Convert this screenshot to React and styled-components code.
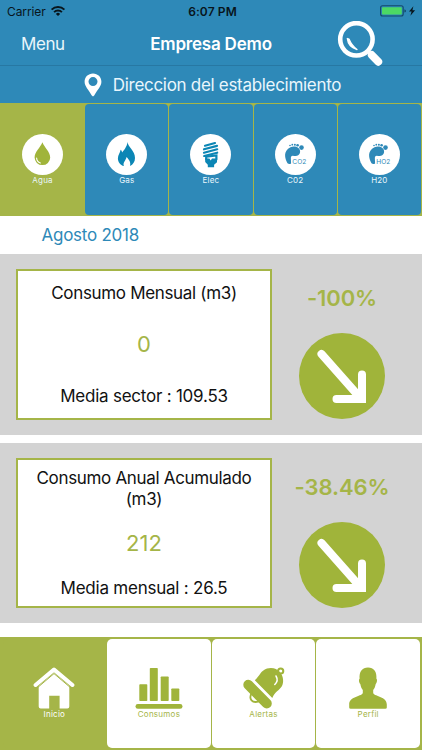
import React from 'react'
import styled, { createGlobalStyle } from 'styled-components'

const BLUE = '#2e89b8'
const GREEN = '#a5b548'
const ICON_GREEN = '#a0b43a'

function App() {
    return (
        <>
            <GlobalStyle />
            <Screen>
                <StatusBar>
                    <Carrier>
                        Carrier
                        <WifiIcon />
                    </Carrier>
                    <Clock>6:07 PM</Clock>
                    <Power>
                        <BatteryIcon />
                    </Power>
                </StatusBar>
                <NavBar>
                    <MenuButton>Menu</MenuButton>
                    <NavTitle>Empresa Demo</NavTitle>
                    <SearchButton aria-label="Buscar"><SearchIcon /></SearchButton>
                </NavBar>
                <AddressBar>
                    <PinIcon />
                    <Address>Direccion del establecimiento</Address>
                </AddressBar>
                <SupplyTabs>
                    {supplies.map(({ label, Icon, active }) => (
                        <SupplyTab key={label} $active={active}>
                            <Icon />
                            <SupplyLabel>{label}</SupplyLabel>
                        </SupplyTab>
                    ))}
                </SupplyTabs>
                <Month>Agosto 2018</Month>
                {readings.map((item) => (
                    <Reading key={item.title}>
                        <ReadingBox>
                            <ReadingTitle>{item.title}</ReadingTitle>
                            <ReadingValue>{item.value}</ReadingValue>
                            <ReadingAverage>{item.average}</ReadingAverage>
                        </ReadingBox>
                        <Trend>
                            <TrendValue>{item.change}</TrendValue>
                            <TrendIcon />
                        </Trend>
                    </Reading>
                ))}
                <Footer>
                    {sections.map(({ label, Icon, active }) => (
                        <FooterTab key={label} $active={active}>
                            <Icon />
                            <FooterLabel>{label}</FooterLabel>
                        </FooterTab>
                    ))}
                </Footer>
            </Screen>
        </>
    )
}

export default App

// icons

const WifiIcon = () => (
    <svg width="16" height="12" viewBox="0 0 16 12" fill="none" stroke="#08151c" strokeWidth="2">
        <path d="M1.6 4.6a9.2 9.2 0 0 1 12.8 0" />
        <path d="M4.1 7.1a5.6 5.6 0 0 1 7.8 0" />
        <path d="M8 11 5.9 8.9a3 3 0 0 1 4.2 0z" fill="#08151c" stroke="none" />
    </svg>
)

const BatteryIcon = () => (
    <svg width="38" height="12" viewBox="0 0 38 12">
        <rect x=".6" y=".8" width="22.6" height="10.2" rx="2" fill="none" stroke="#14496a" strokeWidth="1.1" />
        <rect x="2" y="2.2" width="19.8" height="7.4" rx=".8" fill="#4cd964" />
        <path d="M24.4 4.2q1.6.5 1.6 1.7t-1.6 1.7z" fill="#14496a" />
        <path d="M33.4 1.2 29 6.6h2.6l-1.2 4.2 4.7-5.6h-2.7z" fill="#08151c" />
    </svg>
)

const SearchIcon = () => (
    <svg width="46" height="46" viewBox="0 0 46 46" fill="none" stroke="#fff" strokeLinecap="round">
        <circle cx="19.4" cy="18.3" r="16.2" strokeWidth="4.6" />
        <path d="m30.5 30 3 3" strokeWidth="3" strokeLinecap="butt" />
        <path d="m34.7 34 6.6 6.8" strokeWidth="7.8" />
        <path d="M10.3 17.5Q11.2 26.2 20 28.6Q14.5 24.2 12 18Z" fill="#fff" strokeWidth="1.3" strokeLinejoin="round" />
    </svg>
)

const PinIcon = () => (
    <svg width="18" height="24" viewBox="0 0 18 24">
        <path
            fill="#fff"
            fillRule="evenodd"
            d="M9 .5C4.2.5.6 4.1.6 8.7c0 4.6 4 7.8 7.2 13.9q1.2 1.6 2.4 0C13.4 16.5 17.4 13.3 17.4 8.7 17.4 4.1 13.8.5 9 .5zM9 4.1a4.500 4.500 0 1 1 0 9 4.500 4.500 0 0 1 0-9z"
        />
    </svg>
)

const DropIcon = () => (
    <svg width="41" height="41" viewBox="0 0 41 41">
        <circle cx="20.5" cy="20.5" r="20.5" fill="#fff" />
        <path d="M20.4 8.2C18.4 13.5 12.6 17.8 12.6 23.6a7.8 7.5 0 0 0 15.6 0c0-5.8-5.8-10.1-7.8-15.4z" fill={ICON_GREEN} />
        <path d="M14.6 24q.2 3.800 3.800 5" fill="none" stroke="#fff" strokeWidth="1.1" strokeLinecap="round" />
    </svg>
)

const FlameIcon = () => (
    <svg width="41" height="41" viewBox="0 0 41 41">
        <circle cx="20.5" cy="20.5" r="20.5" fill="#fff" />
        <path
            fill="#0b86b5"
            d="M21.5 8c.3 5 7.5 8.5 7.5 16 0 3.8-2 6.500-5 8 1-3.500-.6-6-3.500-9-.4 3.500-4 5.200-2.600 9-3.600-1-6-3.900-6-7.600 0-3.600 2.200-5.400 2.700-8.600 1 .8 1.400 1.700 1.500 2.800C18 16 20.900 13 21.500 8z"
        />
    </svg>
)

const BulbIcon = () => (
    <svg width="41" height="41" viewBox="0 0 41 41">
        <circle cx="20.5" cy="20.5" r="20.5" fill="#fff" />
        <g fill="none" stroke="#0b86b5" strokeWidth="2.2" strokeLinecap="round">
            <path d="m15 11.7 10-2.7" />
            <path d="m14 15.3 13-3.4" />
            <path d="m14 18.7 13.2-3.4" />
            <path d="m14.2 22 13-3.3" />
            <path d="M16.2 25.5v-2.8l10.2-1.2v4" />
        </g>
        <path d="M15.2 24.5h4.2l1.3 2 1.3-2h5v3.7l-2.9 2.6v2.4h-6.300v-2.400l-2.600-2.800z" fill="#0b86b5" />
    </svg>
)

const FootprintIcon = ({ formula }) => (
    <svg width="41" height="41" viewBox="0 0 41 41">
        <circle cx="20.5" cy="20.5" r="20.5" fill="#fff" />
        <g fill={BLUE}>
            <path d="M15.5 13.3c4-2 9.500.1 9.600 4.100.1 3.700-3.400 5-6.400 4.500-2.700-.4-3 1.200-2.800 3.400l.2 4.200q-2 1.200-3.600-.2C9.800 24.500 7.800 17 15.500 13.300z" />
            <circle cx="26.5" cy="13.6" r="2.3" />
            <circle cx="22.6" cy="11.3" r="1.3" />
            <circle cx="19.9" cy="10.7" r="1" />
            <circle cx="17.3" cy="10.7" r=".9" />
            <circle cx="15" cy="11.5" r=".8" />
        </g>
        <Formula x="17.3" y="29.5" textLength="14" lengthAdjust="spacingAndGlyphs">{formula}</Formula>
    </svg>
)

const Co2Icon = () => <FootprintIcon formula="CO2" />
const H2oIcon = () => <FootprintIcon formula="HO2" />

const TrendIcon = () => (
    <svg width="86" height="86" viewBox="0 0 86 86">
        <circle cx="43" cy="43" r="43" fill={ICON_GREEN} />
        <g fill="none" stroke="#fff" strokeWidth="8" strokeLinecap="round">
            <path d="m22.5 21 38 43" />
            <path d="M37.5 66H63V41.5" />
        </g>
    </svg>
)

const HouseIcon = () => (
    <svg width="42" height="42" viewBox="0 0 42 42">
        <path d="M21 6 36.3 19v20.5q0 2-2 2H26.600V28.800H16.200v12.700H7.700q-2 0-2-2V19z" fill="#fff" />
        <path d="M4.3 20.8 21 6.6l16.7 14.2" fill="none" stroke={GREEN} strokeWidth="1" />
        <path d="M2.6 18 21 2.6 39.4 18" fill="none" stroke="#fff" strokeWidth="4" strokeLinecap="round" strokeLinejoin="round" />
    </svg>
)

const ChartIcon = () => (
    <svg width="48" height="42" viewBox="0 0 48 42" fill={ICON_GREEN}>
        <rect x="4.3" y="17.3" width="8" height="16.7" rx=".8" />
        <rect x="14.8" y="1" width="8" height="33" rx=".8" />
        <rect x="25.7" y="9.5" width="8" height="24.5" rx=".8" />
        <rect x="36.3" y="21.5" width="8" height="12.5" rx=".8" />
        <rect x=".5" y="37" width="47" height="4.8" rx="2.4" />
    </svg>
)

const BellIcon = () => (
    <svg width="42" height="42" viewBox="0 0 42 42">
        <circle cx="37.7" cy="4" r="2.6" fill="none" stroke={ICON_GREEN} strokeWidth="2" />
        <path d="M11.800 13.200C16.500 9.500 17.500 3.500 24 1.500 29.500 0 34 1.800 36.800 5c3.700 3.800 4.400 10.500 1.900 14.600C36.200 23.500 32 24.800 29.300 31z" fill={ICON_GREEN} />
        <path d="M33 9q2.800 4.800-1.200 8.500" fill="none" stroke="#fff" strokeWidth="1.5" strokeLinecap="round" />
        <path d="M5.3 17.8 23.8 36.5" stroke={ICON_GREEN} strokeWidth="10" strokeLinecap="round" />
        <path d="M8.5 26.5c-3 5.500.7 10.200 7.300 7.800" fill="none" stroke={ICON_GREEN} strokeWidth="1.8" />
    </svg>
)

const PersonIcon = () => (
    <svg width="38" height="42" viewBox="0 0 38 42" fill={ICON_GREEN}>
        <path d="M19 .5c5.800 0 9 4 8.400 11.200 1.100.5.600 4.200-.7 5.200-.5 2.500-1.200 4.600-2.500 6v3.300c2.200 3.500 13.500 3.300 13.600 11.200v3q0 1.400-1.500 1.400H1.700Q.2 41.800.2 40.400v-3c.1-7.900 11.400-7.700 13.600-11.200v-3.300c-1.300-1.400-2-3.500-2.500-6-1.300-1-1.800-4.700-.7-5.200C10 4.500 13.200.5 19 .5z" />
    </svg>
)

const supplies = [
    { label: 'Agua', Icon: DropIcon, active: true },
    { label: 'Gas', Icon: FlameIcon },
    { label: 'Elec', Icon: BulbIcon },
    { label: 'C02', Icon: Co2Icon },
    { label: 'H20', Icon: H2oIcon },
]

const readings = [
    { title: 'Consumo Mensual (m3)', value: '0', average: 'Media sector : 109.53', change: '-100%' },
    { title: 'Consumo Anual Acumulado (m3)', value: '212', average: 'Media mensual : 26.5', change: '-38.46%' },
]

const sections = [
    { label: 'Inicio', Icon: HouseIcon, active: true },
    { label: 'Consumos', Icon: ChartIcon },
    { label: 'Alertas', Icon: BellIcon },
    { label: 'Perfil', Icon: PersonIcon },
]

// styles

const GlobalStyle = createGlobalStyle`
    * {
        box-sizing: border-box;
    }

    body {
        margin: 0;
        background: #fff;
        font-family: Inter, "Liberation Sans", sans-serif;
    }

    svg {
        display: block;
        flex-shrink: 0;
    }
`

const Screen = styled.div`
    display: flex;
    flex-direction: column;
    width: 422px;
    height: 750px;
    overflow: hidden;
`

const StatusBar = styled.div`
    display: grid;
    grid-template-columns: 1fr auto 1fr;
    align-items: center;
    height: 22px;
    padding: 0 4px 0 7px;
    background: ${BLUE};
    color: #08151c;
    font-size: 12px;
`

const Carrier = styled.div`
    display: flex;
    align-items: center;
    gap: 4px;
    letter-spacing: -0.1px;
`

const Clock = styled.div`
    font-weight: 600;
    letter-spacing: 0.1px;
`

const Power = styled.div`
    display: flex;
    justify-content: flex-end;
`

const NavBar = styled.div`
    display: grid;
    grid-template-columns: 1fr auto 1fr;
    grid-template-rows: 43px;
    align-items: center;
    height: 44px;
    padding: 0 21px;
    background: ${BLUE};
    border-bottom: 1px solid #2778a3;
    color: #fff;
`

const MenuButton = styled.button`
    justify-self: start;
    padding: 0;
    border: 0;
    background: none;
    color: #e9f6fc;
    font: inherit;
    font-size: 17px;
    letter-spacing: -0.4px;
`

const NavTitle = styled.div`
    font-size: 17px;
    font-weight: 600;
    letter-spacing: -0.2px;
`

const SearchButton = styled.button`
    justify-self: end;
    margin-right: 18px;
    padding: 0;
    border: 0;
    background: none;
`

const AddressBar = styled.div`
    display: flex;
    align-items: center;
    justify-content: center;
    gap: 11px;
    height: 37px;
    padding-left: 3px;
    background: ${BLUE};
`

const Address = styled.div`
    color: #e9f6fc;
    font-size: 17px;
    letter-spacing: -0.3px;
`

const SupplyTabs = styled.div`
    display: grid;
    grid-template-columns: repeat(5, 1fr);
    gap: 1px;
    height: 113px;
    padding: 1px;
    background: ${GREEN};
`

const SupplyTab = styled.div`
    display: flex;
    flex-direction: column;
    align-items: center;
    padding-top: 30px;
    border-radius: 4px;
    background: ${({ $active }) => ($active ? GREEN : BLUE)};
`

const SupplyLabel = styled.div`
    color: #e9f6fc;
    font-size: 8px;
    line-height: 11px;
    letter-spacing: 0.2px;
`

const Formula = styled.text`
    fill: ${BLUE};
    font-size: 6.5px;
`

const Month = styled.div`
    height: 38px;
    padding-left: 41.5px;
    color: ${BLUE};
    font-size: 17px;
    line-height: 39px;
    letter-spacing: -0.25px;
`

const Reading = styled.div`
    display: flex;
    flex-shrink: 0;
    height: 180.5px;
    margin-bottom: 8px;
    padding: 15px 0 15px 16px;
    background: #d3d3d3;
`

const ReadingBox = styled.div`
    display: flex;
    flex-direction: column;
    justify-content: space-around;
    gap: 6px;
    width: 256px;
    padding-top: 1px;
    border: 2px solid ${GREEN};
    background: #fff;
    text-align: center;
`

const ReadingTitle = styled.div`
    padding: 0 15px;
    color: #111;
    font-size: 17px;
    line-height: 20.5px;
    letter-spacing: -0.33px;
`

const ReadingValue = styled.div`
    color: ${GREEN};
    font-size: 22px;
    line-height: 27px;
`

const ReadingAverage = styled.div`
    color: #111;
    font-size: 17px;
    line-height: 20.5px;
    letter-spacing: -0.23px;
`

const Trend = styled.div`
    display: flex;
    flex: 1;
    flex-direction: column;
    align-items: center;
    padding: 15px 10px 0 0;
`

const TrendValue = styled.div`
    margin-bottom: 21px;
    color: ${GREEN};
    font-size: 22px;
    font-weight: 600;
    line-height: 28px;
    letter-spacing: -0.1px;
`

const Footer = styled.div`
    display: grid;
    grid-template-columns: repeat(4, 1fr);
    gap: 1px;
    height: 113px;
    margin-top: auto;
    padding: 2px 2px 2px 2.5px;
    background: ${GREEN};
`

const FooterTab = styled.div`
    display: flex;
    flex-direction: column;
    align-items: center;
    padding-top: 28px;
    border-radius: 5px;
    background: ${({ $active }) => ($active ? GREEN : '#fff')};
    color: ${({ $active }) => ($active ? '#fff' : GREEN)};
`

const FooterLabel = styled.div`
    font-size: 8px;
    line-height: 11px;
    letter-spacing: 0.25px;
`
